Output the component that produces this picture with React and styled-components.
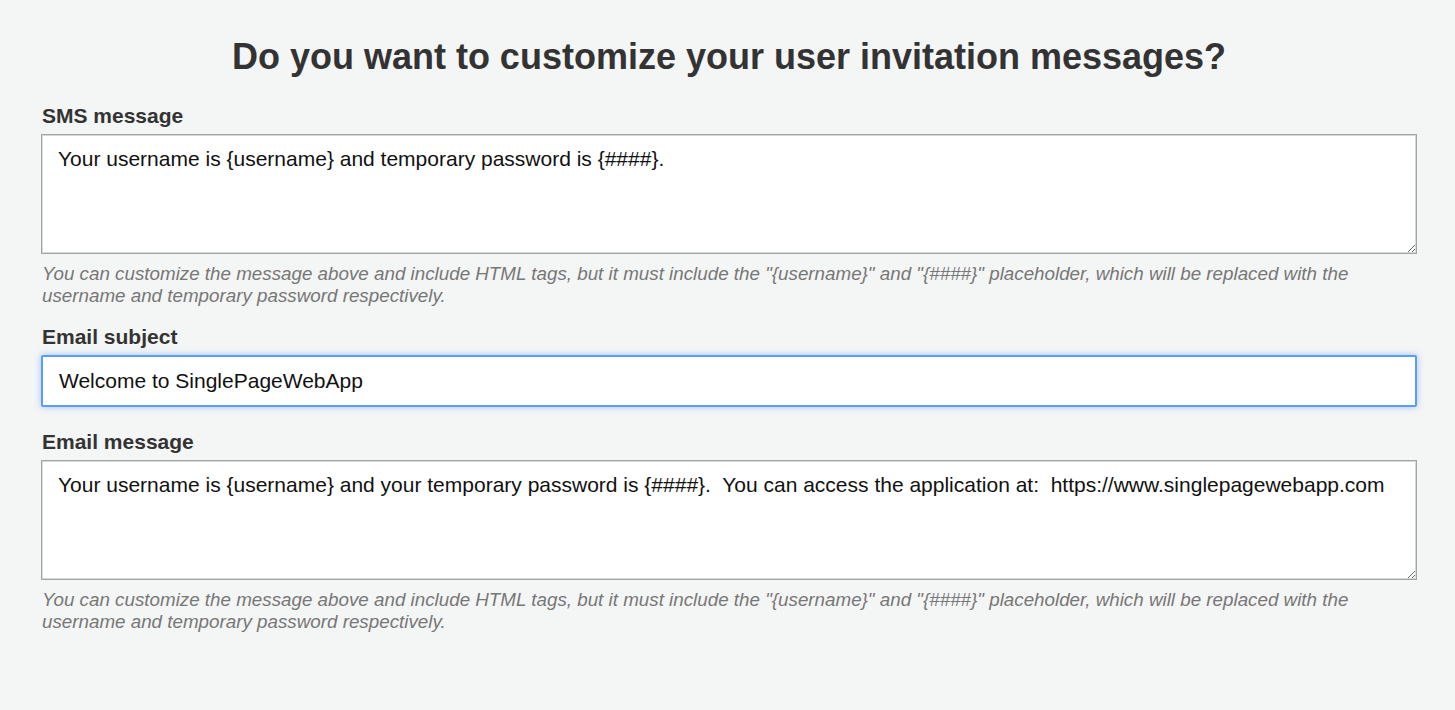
import React from "react";
import styled, { createGlobalStyle } from "styled-components";

const GlobalStyle = createGlobalStyle`
  html, body {
    margin: 0;
    padding: 0;
    background: #f4f5f5;
  }
  body {
    font-family: "Liberation Sans", Arial, sans-serif;
    color: #333;
  }
`;

const Page = styled.div`
  padding: 35px 38px 40px 41px;
`;

const Title = styled.h1`
  margin: 0 0 25px;
  text-align: center;
  font-size: 36px;
  font-weight: bold;
  color: #333;
  line-height: 44px;
`;

const Field = styled.div`
  display: flex;
  flex-direction: column;
  margin-bottom: ${(p) => p.$gap || 18}px;
`;

const Label = styled.label`
  font-size: 21px;
  font-weight: bold;
  color: #333;
  line-height: 24px;
  margin: 0 0 6px 1px;
`;

const TextArea = styled.textarea`
  box-sizing: border-box;
  width: 100%;
  height: 120px;
  padding: 12px 16px;
  font-family: "Liberation Sans", Arial, sans-serif;
  font-size: 21px;
  line-height: 24px;
  color: #111;
  background: #fff;
  border: 1px solid #a2a5a6;
  box-shadow: inset 0 0 0 1px #d6d8d9;
  border-radius: 0;
  outline: none;
  resize: vertical;
`;

const Input = styled.input`
  box-sizing: border-box;
  width: 100%;
  height: 52px;
  padding: 0 16px;
  font-family: "Liberation Sans", Arial, sans-serif;
  font-size: 21px;
  color: #111;
  background: #fff;
  border: 2px solid ${(p) => (p.$focused ? "#5b9cf7" : "#a2a5a6")};
  border-radius: 2px;
  box-shadow: ${(p) => (p.$focused ? "0 0 6px rgba(77, 144, 254, 0.5)" : "none")};
  outline: none;
`;

const Help = styled.p`
  margin: 9px 0 0 1px;
  font-size: 18.8px;
  line-height: 22px;
  font-style: italic;
  color: #777;
`;

const helpText =
  'You can customize the message above and include HTML tags, but it must include the "{username}" and "{####}" placeholder, which will be replaced with the username and temporary password respectively.';

export default function App() {
  return (
    <>
      <GlobalStyle />
      <Page>
        <Title>Do you want to customize your user invitation messages?</Title>

        <Field>
          <Label>SMS message</Label>
          <TextArea
            defaultValue="Your username is {username} and temporary password is {####}."
            spellCheck={false}
          />
          <Help>{helpText}</Help>
        </Field>

        <Field $gap={23}>
          <Label>Email subject</Label>
          <Input $focused defaultValue="Welcome to SinglePageWebApp" />
        </Field>

        <Field>
          <Label>Email message</Label>
          <TextArea
            defaultValue="Your username is {username} and your temporary password is {####}.  You can access the application at:  https://www.singlepagewebapp.com"
            spellCheck={false}
          />
          <Help>{helpText}</Help>
        </Field>
      </Page>
    </>
  );
}
